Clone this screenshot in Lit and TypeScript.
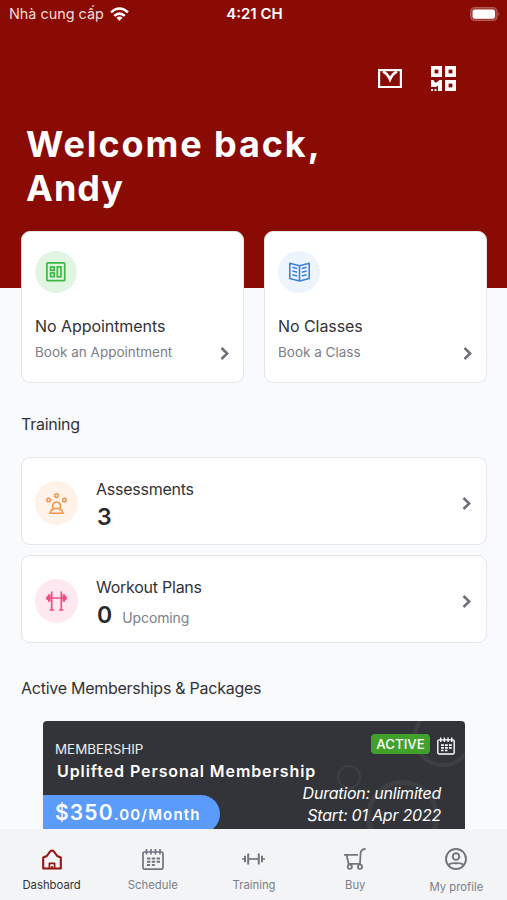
import { LitElement, html, css, svg } from "lit";
import { customElement, property } from "lit/decorators.js";

const icons: Record<string, unknown> = {
  mail: svg`<g fill="none" stroke="#fff"><rect x="1.1" y="1.1" width="21.800" height="17" stroke-width="2.200" /><path d="M5 2.500C8.500 4.200 10.300 6.500 12 10.500C13.700 6.500 15.500 4.200 19 2.500" stroke-width="2.600" /></g>`,
  qr: svg`<g fill="none" stroke="#fff" stroke-width="3.600"><rect x="1.800" y="1.800" width="7.400" height="7.400" /><rect x="15.800" y="1.800" width="7.400" height="7.400" /><rect x="15.800" y="15.800" width="7.400" height="7.400" /></g><g fill="#fff"><path d="M0 14h2.500l1.500 2.500h1.500L8.500 14H11v11H7v-5.500L5 21H0z" /><path d="M0 23h2v2H0zM3.500 23h2v2h-2z" /></g>`,
  board: svg`<g fill="none" stroke="#3cb940" stroke-width="1.7"><rect x=".9" y=".9" width="17.800" height="17.800" rx="1" /><rect x="4.600" y="5" width="3.600" height="3.400" /><rect x="4.600" y="11" width="3.600" height="3.600" /><rect x="11.300" y="4.800" width="3.600" height="10" /></g>`,
  book: svg`<g fill="none" stroke="#3b82d8" stroke-width="1.600" stroke-linejoin="round"><path d="M.8 1.200L10.500 3.800L20.200 1.200V16.500L10.500 19L.8 16.500zM10.500 3.800V19" /><path d="M3.400 5.200l4.800 1.300M3.400 9l4.800 1.300M3.400 12.800l4.800 1.300M17.600 5.200l-4.800 1.300M17.600 9l-4.800 1.300M17.600 12.800l-4.800 1.300" /></g>`,
  person: svg`<g fill="none" stroke="#f5924a" stroke-width="1.500"><circle cx="10.500" cy="2.600" r="1.800" /><circle cx="2.600" cy="7" r="1.800" /><circle cx="18.400" cy="7" r="1.800" /><path d="M7.500 17C5.500 12.500 7 9 10.500 9S15.500 12.500 13.500 17" /><path d="M7.300 17H5.400L4 20.300H17L15.600 17H13.700M7.500 15.600h6" /></g>`,
  rack: svg`<g fill="none" stroke="#ee4f85" stroke-width="1.700"><path d="M5.700 .5v18.500M15.300 .5v18.500M3.500 19h4.600M12.900 19h4.600M0 7h21" /><path d="M3.200 3.200v7.600M17.800 3.200v7.600" stroke-width="2.600" /><path d="M1.400 5v4M19.600 5v4" stroke-width="1.600" /></g>`,
  chevron: svg`<path d="M1.500 1L7.200 6.500L1.500 12" fill="none" stroke="#6d6f78" stroke-width="2.500" />`,
  calendar: svg`<g fill="none" stroke="currentColor" stroke-width="1.700"><rect x="1" y="3" width="20" height="17.200" rx="1.600" /><path d="M4.500 0v5.500M9 0v5.500M13.500 0v5.500M18 0v5.500" /><path d="M5 9.500h3.400M9.800 9.500h3.400M14.600 9.500h3.400M5 12.800h3.400M9.800 12.800h3.400M14.600 12.800h3.400M5 16h3M9.800 16h3" stroke-width="2" /></g>`,
  home: svg`<g fill="none" stroke="#971410" stroke-linejoin="round"><path d="M1.200 19.500V8.500L4.800 7L8.200 2.400Q10 .6 11.800 2.400L15.200 7L18.800 8.500V19.500z" stroke-width="2.100" /><path d="M7.400 19.500V14.400h5.200V19.500M10 17v2.500" stroke-width="1.700" /></g>`,
  dumbbell: svg`<g fill="none" stroke="#73757e"><path d="M6 6h11" stroke-width="1.700" /><path d="M0 6h3M20 6h3" stroke-width="1.700" /><path d="M3 2.800v6.400M20 2.800v6.400" stroke-width="2" /><path d="M6.200 .5v11M16.800 .5v11" stroke-width="2" /></g>`,
  cart: svg`<g fill="none" stroke="#73757e" stroke-width="1.800"><path d="M0 6.800h14M2.600 7l2 8.800h11.400L16.600 5C17 2.500 18.500 1 21.500 1" /><circle cx="5.800" cy="18.700" r="2.100" /><circle cx="16" cy="18.700" r="2.100" /></g>`,
  profile: svg`<g fill="none" stroke="#73757e" stroke-width="1.900"><circle cx="11" cy="11" r="10" /><circle cx="11" cy="8.600" r="3.300" /><path d="M4.200 18.200V16.500c1.300-1.700 4-1.300 6.800-1.300s5.500-.4 6.800 1.300v1.700" /></g>`,
  wifi: svg`<g fill="none" stroke="#fff" stroke-width="2.600"><path d="M1 5.400Q9.500-2.400 18 5.400M4.200 8.900Q9.500 4.200 14.800 8.900" /></g><path d="M6.400 10.800Q9.500 8.200 12.600 10.800L9.500 14z" fill="#fff" />`,
  battery: svg`<rect x=".6" y=".6" width="26.500" height="13" rx="4" fill="#a13b38" stroke="#b9605d" stroke-width="1" /><rect x="2.600" y="2.400" width="22.400" height="9.400" rx="2.300" fill="#fff" /><path d="M28.500 5q1.800 2 0 4.200z" fill="#b9605d" />`,
};

const icon = (name: string, w: number, h: number) =>
  html`<svg class="icon" width=${w} height=${h} viewBox="0 0 ${w} ${h}">${icons[name]}</svg>`;

@customElement("book-card")
class BookCard extends LitElement {
  @property() heading = "";
  @property() action = "";
  @property() glyph = "";
  static styles = css`
    :host { display: flex; flex-direction: column; box-sizing: border-box; height: 152px; padding: 19px 14px 0 13px; background: #fff; border: 1px solid #e4e6ea; border-radius: 9px; }
    .disc { width: 42px; height: 42px; border-radius: 50%; display: grid; place-items: center; }
    .board { background: #e2f5e3; }
    .book { background: #edf4fe; }
    .icon { display: block; }
    .heading { margin-top: 21px; font-size: 16px; line-height: 24px; letter-spacing: -.06px; color: #323338; }
    .row { display: flex; justify-content: space-between; align-items: center; font-size: 13.500px; line-height: 20px; margin-top: 4px; color: #7c7e88; }
    .row .icon { margin-top: 2px; }
  `;
  render() {
    return html`<div class="disc ${this.glyph}">${this.glyph === "board" ? icon("board", 20, 20) : icon("book", 21, 20)}</div>
      <div class="heading">${this.heading}</div>
      <div class="row"><span>${this.action}</span>${icon("chevron", 9, 13)}</div>`;
  }
}

@customElement("training-row")
class TrainingRow extends LitElement {
  @property() heading = "";
  @property() count = "";
  @property() note = "";
  @property() glyph = "";
  static styles = css`
    :host { display: flex; align-items: center; box-sizing: border-box; height: 88px; padding: 4px 15px 0 13px; background: #fff; border: 1px solid #e4e6ea; border-radius: 9px; }
    .disc { width: 43px; height: 44px; border-radius: 50%; display: grid; place-items: center; margin-right: 18px; }
    .person { background: #fff2e9; }
    .rack { background: #ffe8f0; }
    .icon { display: block; }
    .copy { flex: 1; padding-top: 3px; }
    .heading { font-size: 16px; line-height: 24px; letter-spacing: -.25px; color: #323338; }
    .line { display: flex; align-items: baseline; gap: 10px; height: 32px; line-height: 32px; padding-left: 1px; }
    .count { font-size: 23px; font-weight: 600; color: #292a2f; }
    .note { font-size: 14px; letter-spacing: -.1px; color: #7c7e88; }
  `;
  render() {
    return html`<div class="disc ${this.glyph}">${icon(this.glyph, 21, 21)}</div>
      <div class="copy">
        <div class="heading">${this.heading}</div>
        <div class="line"><span class="count">${this.count}</span><span class="note">${this.note}</span></div>
      </div>
      ${icon("chevron", 9, 13)}`;
  }
}

@customElement("app-root")
class AppRoot extends LitElement {
  static styles = css`
    :host { display: flex; flex-direction: column; height: 900px; overflow: hidden; background: #f9fafc; font-family: Inter, "Noto Sans", sans-serif; color: #323338; }
    .icon { display: block; }
    .hero { flex: none; height: 288px; background: #8a0a04; color: #fff; }
    .status { display: grid; grid-template-columns: 1fr auto 1fr; height: 27px; padding: 0 7px 1px 9px; align-items: center; font-size: 14.400px; }
    .carrier { display: flex; align-items: center; gap: 6px; color: #f3dcdb; }
    .clock { font-weight: 600; font-size: 15px; }
    .battery { justify-self: end; }
    .tools { display: flex; justify-content: flex-end; align-items: center; gap: 29px; height: 26px; padding: 37px 51px 0 0; }
    .welcome { margin: 31px 0 0 26px; font-size: 36px; line-height: 44px; font-weight: 700; letter-spacing: 1.900px; }
    .given { letter-spacing: 1px; }
    main { flex: 1; min-height: 0; overflow: hidden; margin-top: -57px; padding: 0 20px 0 21px; }
    .cards { display: grid; grid-template-columns: 223px 223px; justify-content: space-between; }
    h2 { margin: 0; font-size: 16px; line-height: 24px; font-weight: 400; letter-spacing: -.26px; }
    .training { margin: 29px 0 21px; }
    .rows { display: grid; gap: 10px; }
    .packages { margin: 33px 0 21px; }
    .pass { position: relative; overflow: hidden; height: 150px; margin: 0 22px; border-radius: 4px; background: #333439; color: #fff; }
    .ring { position: absolute; box-sizing: border-box; border-radius: 50%; border: 3px solid #3e3f43; }
    .r1 { width: 60px; height: 60px; left: 370px; top: -14px; border-width: 4px; }
    .r2 { width: 24px; height: 24px; left: 294px; top: 44px; border-width: 2px; }
    .r3 { width: 73px; height: 73px; left: 323px; top: 59px; border-width: 5px; }
    .top { position: relative; display: flex; align-items: flex-start; padding: 13px 10px 0 12px; height: 26px; }
    .kind { flex: 1; font-size: 13.400px; line-height: 20px; margin-top: 5px; color: #eeeef0; }
    .active { width: 59px; height: 20px; border-radius: 4px; background: #41a12a; font-size: 13.300px; font-weight: 500; line-height: 20px; text-align: center; }
    .top .icon { margin: 3px 0 0 7px; }
    .name { position: relative; padding-left: 14px; font-size: 16px; line-height: 22px; font-weight: 600; letter-spacing: .91px; }
    .bottom { position: relative; display: flex; justify-content: space-between; padding-right: 24px; }
    .price { box-sizing: border-box; width: 177px; height: 38px; margin-top: 13px; padding-left: 12px; border-radius: 0 19px 19px 0; background: #5a9bfb; font-size: 15px; line-height: 35px; font-weight: 600; letter-spacing: 1.150px; white-space: nowrap; }
    .price b { font-size: 21px; font-weight: 600; }
    .dates { font-size: 16px; line-height: 22px; font-style: italic; letter-spacing: -.22px; text-align: right; }
    nav { flex: none; display: grid; grid-template-columns: repeat(5, 1fr); height: 71px; padding-left: 1px; background: #f3f4f6; font-size: 11.300px; line-height: 16px; color: #7c7e88; }
    .tab { display: flex; flex-direction: column; align-items: center; }
    .glyph { height: 22px; margin: 19px 0 7px; display: grid; place-items: center; }
    .tab.on { color: #323338; }
    .tab.low .glyph { margin-bottom: 9px; }
    .gray { color: #73757e; }
  `;

  tabs = [
    { label: "Dashboard", art: icon("home", 20, 21), cls: "on" },
    { label: "Schedule", art: icon("calendar", 22, 21), cls: "" },
    { label: "Training", art: icon("dumbbell", 23, 12), cls: "" },
    { label: "Buy", art: icon("cart", 22, 22), cls: "" },
    { label: "My profile", art: icon("profile", 22, 22), cls: "low" },
  ];

  render() {
    return html`
      <header class="hero">
        <div class="status">
          <div class="carrier"><span>Nhà cung cấp</span>${icon("wifi", 19, 14)}</div>
          <div class="clock">4:21 CH</div>
          <div class="battery">${icon("battery", 30, 14)}</div>
        </div>
        <div class="tools">${icon("mail", 24, 19)}${icon("qr", 25, 25)}</div>
        <div class="welcome">Welcome back,<br /><span class="given">Andy</span></div>
      </header>
      <main>
        <div class="cards">
          <book-card heading="No Appointments" action="Book an Appointment" glyph="board"></book-card>
          <book-card heading="No Classes" action="Book a Class" glyph="book"></book-card>
        </div>
        <h2 class="training">Training</h2>
        <div class="rows">
          <training-row heading="Assessments" count="3" glyph="person"></training-row>
          <training-row heading="Workout Plans" count="0" note="Upcoming" glyph="rack"></training-row>
        </div>
        <h2 class="packages">Active Memberships &amp; Packages</h2>
        <section class="pass">
          <i class="ring r1"></i><i class="ring r2"></i><i class="ring r3"></i>
          <div class="top">
            <span class="kind">MEMBERSHIP</span><span class="active">ACTIVE</span>
            <svg class="icon" width="18" height="18" viewBox="0 0 22 21">${icons.calendar}</svg>
          </div>
          <div class="name">Uplifted Personal Membership</div>
          <div class="bottom">
            <div class="price"><b>$350</b>.00/Month</div>
            <div class="dates">Duration: unlimited<br />Start: 01 Apr 2022</div>
          </div>
        </section>
      </main>
      <nav>
        ${this.tabs.map((t) => html`<div class="tab ${t.cls}"><div class="glyph gray">${t.art}</div><span>${t.label}</span></div>`)}
      </nav>`;
  }
}
